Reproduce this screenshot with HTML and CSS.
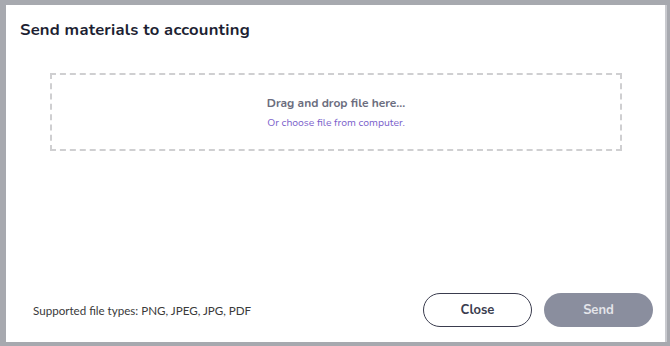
FILE: index.html
```html
<!DOCTYPE html>
<html>
<head>
<meta charset="utf-8">
<link rel="stylesheet" href="styles.css">
</head>
<body>
<div class="dialog">
  <h1 class="title">Send materials to accounting</h1>
  <div class="dropzone">
    <div class="drop-main">Drag and drop file here...</div>
    <div class="drop-sub">Or choose file from computer.</div>
  </div>
  <div class="footer">
    <div class="types">Supported file types: PNG, JPEG, JPG, PDF</div>
    <div class="actions">
      <button class="btn btn-close">Close</button>
      <button class="btn btn-send">Send</button>
    </div>
  </div>
</div>
</body>
</html>
```
FILE: styles.css
```css
html, body {
  margin: 0;
  padding: 0;
}
body {
  width: 670px;
  height: 346px;
  background: #a7a9af;
  box-sizing: border-box;
  padding: 5px 5px 4px 6px;
  font-family: "Nunito", "Lato", "Noto Sans", sans-serif;
}
.dialog {
  background: #fff;
  width: 659px;
  height: 337px;
  box-sizing: border-box;
  display: flex;
  flex-direction: column;
  box-shadow: 2px 0 0 #c9cacf;
}
.title {
  margin: 0;
  padding: 15px 0 0 14px;
  font-size: 16.6px;
  font-weight: 700;
  color: #1d1f33;
  letter-spacing: 0.2px;
  line-height: 20px;
}
.dropzone {
  margin: 33px 43px 0 44px;
  height: 78px;
  box-sizing: border-box;
  border: 2px dashed #cfcfd1;
  display: flex;
  flex-direction: column;
  align-items: center;
  justify-content: center;
}
.drop-main {
  font-size: 12px;
  font-weight: 700;
  color: #6b6d7e;
  line-height: 14px;
  margin-top: 1px;
}
.drop-sub {
  font-size: 10.4px;
  color: #7b5fcb;
  line-height: 12px;
  margin-top: 7px;
}
.footer {
  margin-top: auto;
  display: flex;
  align-items: center;
  justify-content: space-between;
  padding: 0 12px 15px 27px;
}
.types {
  font-family: "Lato", "Noto Sans", sans-serif;
  font-size: 11.6px;
  color: #3a3a3a;
}
.actions {
  display: flex;
  gap: 12px;
}
.btn {
  width: 109px;
  height: 34px;
  border-radius: 17px;
  font-family: "Nunito", "Lato", "Noto Sans", sans-serif;
  font-size: 13px;
  font-weight: 700;
  box-sizing: border-box;
  padding: 0;
}
.btn-close {
  background: #fff;
  border: 1px solid #3a3c4e;
  color: #3a3c4e;
}
.btn-send {
  background: #8a8e9e;
  border: none;
  color: #e4e5ea;
}
```
